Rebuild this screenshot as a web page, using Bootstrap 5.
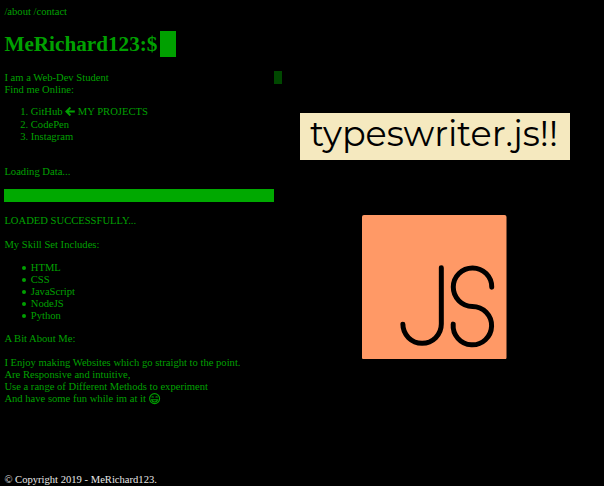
<!DOCTYPE html>
<html lang="en">
<head>
<meta charset="utf-8">
<meta name="viewport" content="width=device-width, initial-scale=1">
<title>MeRichard123</title>
<link rel="stylesheet" href="https://cdn.jsdelivr.net/npm/bootstrap@5.3.0/dist/css/bootstrap.min.css">
<style>
body{background:#000;color:#00a000;font-family:"Liberation Serif","Times New Roman",serif;font-size:10.6px;line-height:12px;height:486px}
.terminal{width:295px;padding:6px 0 0 4.4px}
.prompt{font-size:21.2px;line-height:26px;font-weight:700;margin-top:13px}
.cursor{width:15.5px;height:26px;background:#00a000;margin-left:3px}
.intro{margin-top:14px}
.intro-text{padding-top:1px}
.blink{width:8px;height:13px;background:#004800;margin-right:12.8px}
.terminal ol,.terminal ul{padding-left:26.4px;margin:11px 0 0}
.terminal ol{margin-top:10px}
.terminal ol li:first-child{height:13px}
.terminal ul{list-style:none}
.terminal ul li::before{content:"";display:inline-block;width:4px;height:4px;border-radius:50%;background:currentColor;margin:0 5px 1.5px -9px}
.arrow{width:10px;height:9px;margin-top:1px}
.loading{margin-top:23px}
.loadbar{width:270px;height:13px;background:#00a900;margin-top:11px}
.loaded{margin-top:13px}
.line-gap{margin-top:12px}
.about-gap{margin-top:11px}
.smile{width:12px;height:12px}
.foot{color:#e8e8e8;padding-left:4.4px;height:12px}
.showcase{padding-top:113px;padding-left:4.5px}
.banner{width:270px;height:47px;background:#f5e9bf;overflow:visible}
.logo{width:144.5px;height:144.5px;margin:54.5px 0 0 62.8px}
</style>
<script src="https://cdn.jsdelivr.net/npm/bootstrap@5.3.0/dist/js/bootstrap.bundle.min.js"></script>
</head>
<body class="d-flex flex-column overflow-hidden">
<main class="d-flex flex-grow-1">
<section class="terminal flex-shrink-0 text-nowrap">
  <nav>/about /contact</nav>
  <h1 class="prompt d-flex align-items-center mb-0"><span>MeRichard123:$</span><span class="cursor"></span></h1>
  <div class="intro d-flex justify-content-between"><div class="intro-text">I am a Web-Dev Student<br>Find me Online:</div><span class="blink"></span></div>
  <ol>
    <li>GitHub <svg class="arrow align-top" viewBox="0 0 10 9" fill="none" stroke="currentColor" stroke-width="1.8"><path d="M9.8 4.5H1.5M5.4.5 1.3 4.5l4.1 4"/></svg> MY PROJECTS</li>
    <li>CodePen</li>
    <li>Instagram</li>
  </ol>
  <div class="loading">Loading Data...</div>
  <div class="loadbar"></div>
  <div class="loaded">LOADED SUCCESSFULLY...</div>
  <div class="line-gap">My Skill Set Includes:</div>
  <ul><li>HTML</li><li>CSS</li><li>JavaScript</li><li>NodeJS</li><li>Python</li></ul>
  <div class="about-gap">A Bit About Me:</div>
  <div class="line-gap">I Enjoy making Websites which go straight to the point.<br>Are Responsive and intuitive,<br>Use a range of Different Methods to experiment<br>And have some fun while im at it <svg class="smile align-top" viewBox="0 0 12 12" fill="none" stroke="currentColor" stroke-width="1.1"><circle cx="5.6" cy="5.6" r="5"/><path d="M2.6 4.4q1-1.4 2 0M6.6 4.4q1-1.4 2 0M2.6 6.8h6q-.8 2.2-3 2.2t-3-2.2z"/></svg></div>
</section>
<section class="showcase">
  <svg class="banner d-block" viewBox="0 0 270 47"><text x="10" y="33" textLength="248" lengthAdjust="spacingAndGlyphs" font-family="Montserrat,Lato,sans-serif" font-size="36">typeswriter.js!!</text></svg>
  <svg class="logo d-block" viewBox="0 0 145 145" fill="none"><rect width="145" height="145" rx="2" fill="#ff9966"/><path d="M41 109.5a19.3 19.3 0 0 0 38.6 0V53M130.2 72.5a19.3 19.3 0 1 0-19.4 19.2 19.3 19.3 0 1 1-19.3 17.8" stroke="#000" stroke-width="5" stroke-linecap="round"/></svg>
</section>
</main>
<footer class="foot flex-shrink-0">© Copyright 2019 - MeRichard123.</footer>
</body>
</html>
